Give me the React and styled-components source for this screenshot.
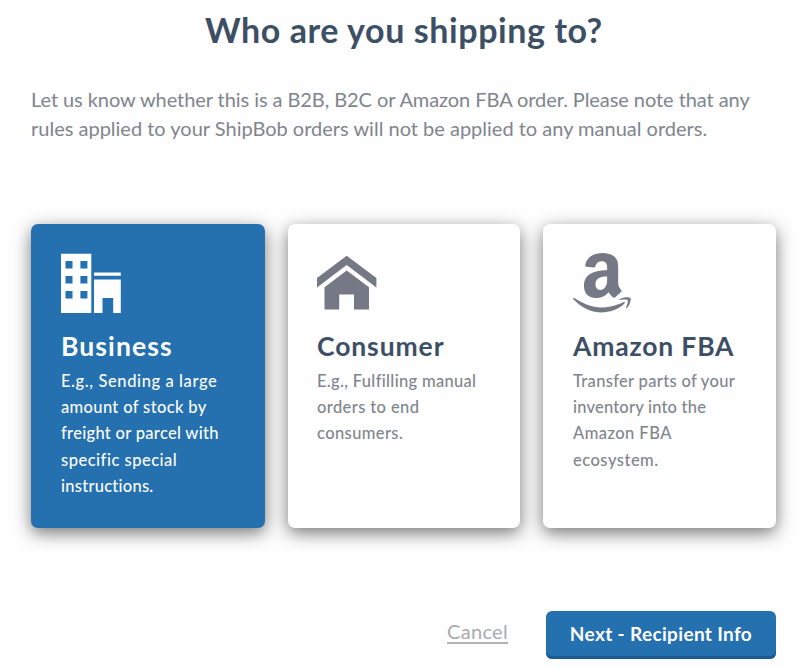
import React, { useState } from 'react';
import styled, { createGlobalStyle } from 'styled-components';
import { BsAmazon } from 'react-icons/bs';

const GlobalStyle = createGlobalStyle`
  body {
    margin: 0;
    background-color: #fefefe;
    font-family: Lato, "Liberation Sans", sans-serif;
  }
`;

const Container = styled.div`
    box-sizing: border-box;
    width: 800px;
    height: 668px;
    padding: 8px 24px 0 31px;
    overflow: hidden;
`;

const Title = styled.h1`
    margin: 0 0 0 174px;
    font-size: 34px;
    line-height: 44px;
    font-weight: bold;
    letter-spacing: 0.58px;
    color: #3d4f65;
    white-space: nowrap;
`;

const Intro = styled.p`
    margin: 33px 0 0;
    font-size: 20px;
    line-height: 29px;
    color: #80858d;
`;

const IntroLine = styled.span`
    display: block;
    white-space: nowrap;
    letter-spacing: ${(props) => props.$spacing}px;
`;

const Cards = styled.div`
    display: grid;
    grid-template-columns: 234px 232px 233px;
    column-gap: 23px;
    height: 304px;
    margin-top: 81px;
`;

const Card = styled.div`
    box-sizing: border-box;
    padding: 29px 0 0 ${(props) => props.$indent}px;
    border-radius: 7px;
    cursor: pointer;
    background-color: ${(props) => (props.$selected ? '#2570af' : '#fefefe')};
    color: ${(props) => (props.$selected ? '#fdfdfe' : '#80858d')};
    box-shadow: 0 5px 17px rgba(0, 0, 0, 0.54);
`;

const IconBox = styled.div`
    height: 60px;
    color: ${(props) => (props.$selected ? '#fefefe' : '#747985')};

    svg {
      display: block;
    }
`;

const CardTitle = styled.h2`
    margin: 16px 0 0;
    font-size: 26.5px;
    line-height: 34px;
    font-weight: bold;
    letter-spacing: ${(props) => props.$spacing}px;
    white-space: nowrap;
    color: ${(props) => (props.$selected ? '#fefefe' : '#3d4f65')};
`;

const CardText = styled.p`
    margin: 5px 0 0;
    font-size: 16.5px;
    line-height: 26.2px;
    font-weight: 500;
`;

const CardLine = styled.span`
    display: block;
    white-space: nowrap;
    letter-spacing: ${(props) => props.$spacing}px;
`;

const Actions = styled.div`
    display: flex;
    justify-content: flex-end;
    align-items: flex-start;
    margin-top: 83px;
`;

const CancelLink = styled.a`
    margin: 10px 38px 0 0;
    border-bottom: 2px solid #b0b2b5;
    font-size: 20px;
    line-height: 21px;
    letter-spacing: 0.3px;
    color: #a9abae;
    cursor: pointer;
`;

const NextButton = styled.button`
    box-sizing: border-box;
    width: 230px;
    height: 48px;
    padding: 0 0 4px;
    border: none;
    border-radius: 6px;
    background-color: #2570af;
    box-shadow: inset 0 -3px 0 #1b5a90;
    font-family: inherit;
    font-size: 19px;
    font-weight: bold;
    letter-spacing: 0.35px;
    color: #fefefe;
    cursor: pointer;
`;

const BusinessIcon = () => (
  <svg width="60" height="60" viewBox="0 0 60 60" fill="currentColor">
    <path fillRule="evenodd" d="M0 .7h30.3V60H0zM4.5 8v7.6h7V8zM19.4 8v7.6h7V8zM4.5 23v7.6h7V23zM19.4 23v7.6h7V23zM4.5 38v7.6h7V38zM19.4 38v7.6h7V38z" />
    <path d="M33 19.4h26.8v3.4H33zM33 26.5h26.8V60h-7.6V45H41.5v15H33z" />
  </svg>
);

const HouseIcon = () => (
  <svg width="60" height="60" viewBox="0 0 60 60" fill="currentColor">
    <path d="M0 24.9 29.7 2.7l29.7 22.2v9.6L29.7 12 0 34.5z" />
    <path d="M29.7 17.5 52 34.2v22.3H37v-15H22.2v15H7.5V34.2z" />
  </svg>
);

// each text line carries its own tracking
const options = [
  {
    title: 'Business',
    spacing: 1.1,
    indent: 30,
    icon: <BusinessIcon />,
    text: [
      ['E.g., Sending a large', 0.6],
      ['amount of stock by', 0.35],
      ['freight or parcel with', 0.3],
      ['specific special', 0.5],
      ['instructions.', 0.25],
    ],
  },
  {
    title: 'Consumer',
    spacing: 0.9,
    indent: 29,
    icon: <HouseIcon />,
    text: [
      ['E.g., Fulfilling manual', 0.32],
      ['orders to end', 0.4],
      ['consumers.', 0.4],
    ],
  },
  {
    title: 'Amazon FBA',
    spacing: 0.82,
    indent: 30,
    icon: <BsAmazon size={59.5} />,
    text: [
      ['Transfer parts of your', 0.32],
      ['inventory into the', 0.2],
      ['Amazon FBA', 0.45],
      ['ecosystem.', 0.5],
    ],
  },
];

const App = () => {
  const [selected, setSelected] = useState('Business');

  return (
    <Container>
      <GlobalStyle />
      <Title>Who are you shipping to?</Title>
      <Intro>
        <IntroLine $spacing={-0.07}>Let us know whether this is a B2B, B2C or Amazon FBA order. Please note that any</IntroLine>
        <IntroLine $spacing={0}>rules applied to your ShipBob orders will not be applied to any manual orders.</IntroLine>
      </Intro>
      <Cards>
        {options.map((option) => {
          const active = option.title === selected;
          return (
            <Card key={option.title} $selected={active} $indent={option.indent} onClick={() => setSelected(option.title)}>
              <IconBox $selected={active}>{option.icon}</IconBox>
              <CardTitle $selected={active} $spacing={option.spacing}>{option.title}</CardTitle>
              <CardText>
                {option.text.map(([line, spacing]) => (
                  <CardLine key={line} $spacing={spacing}>{line}</CardLine>
                ))}
              </CardText>
            </Card>
          );
        })}
      </Cards>
      <Actions>
        <CancelLink>Cancel</CancelLink>
        <NextButton>Next - Recipient Info</NextButton>
      </Actions>
    </Container>
  );
};

export default App;
